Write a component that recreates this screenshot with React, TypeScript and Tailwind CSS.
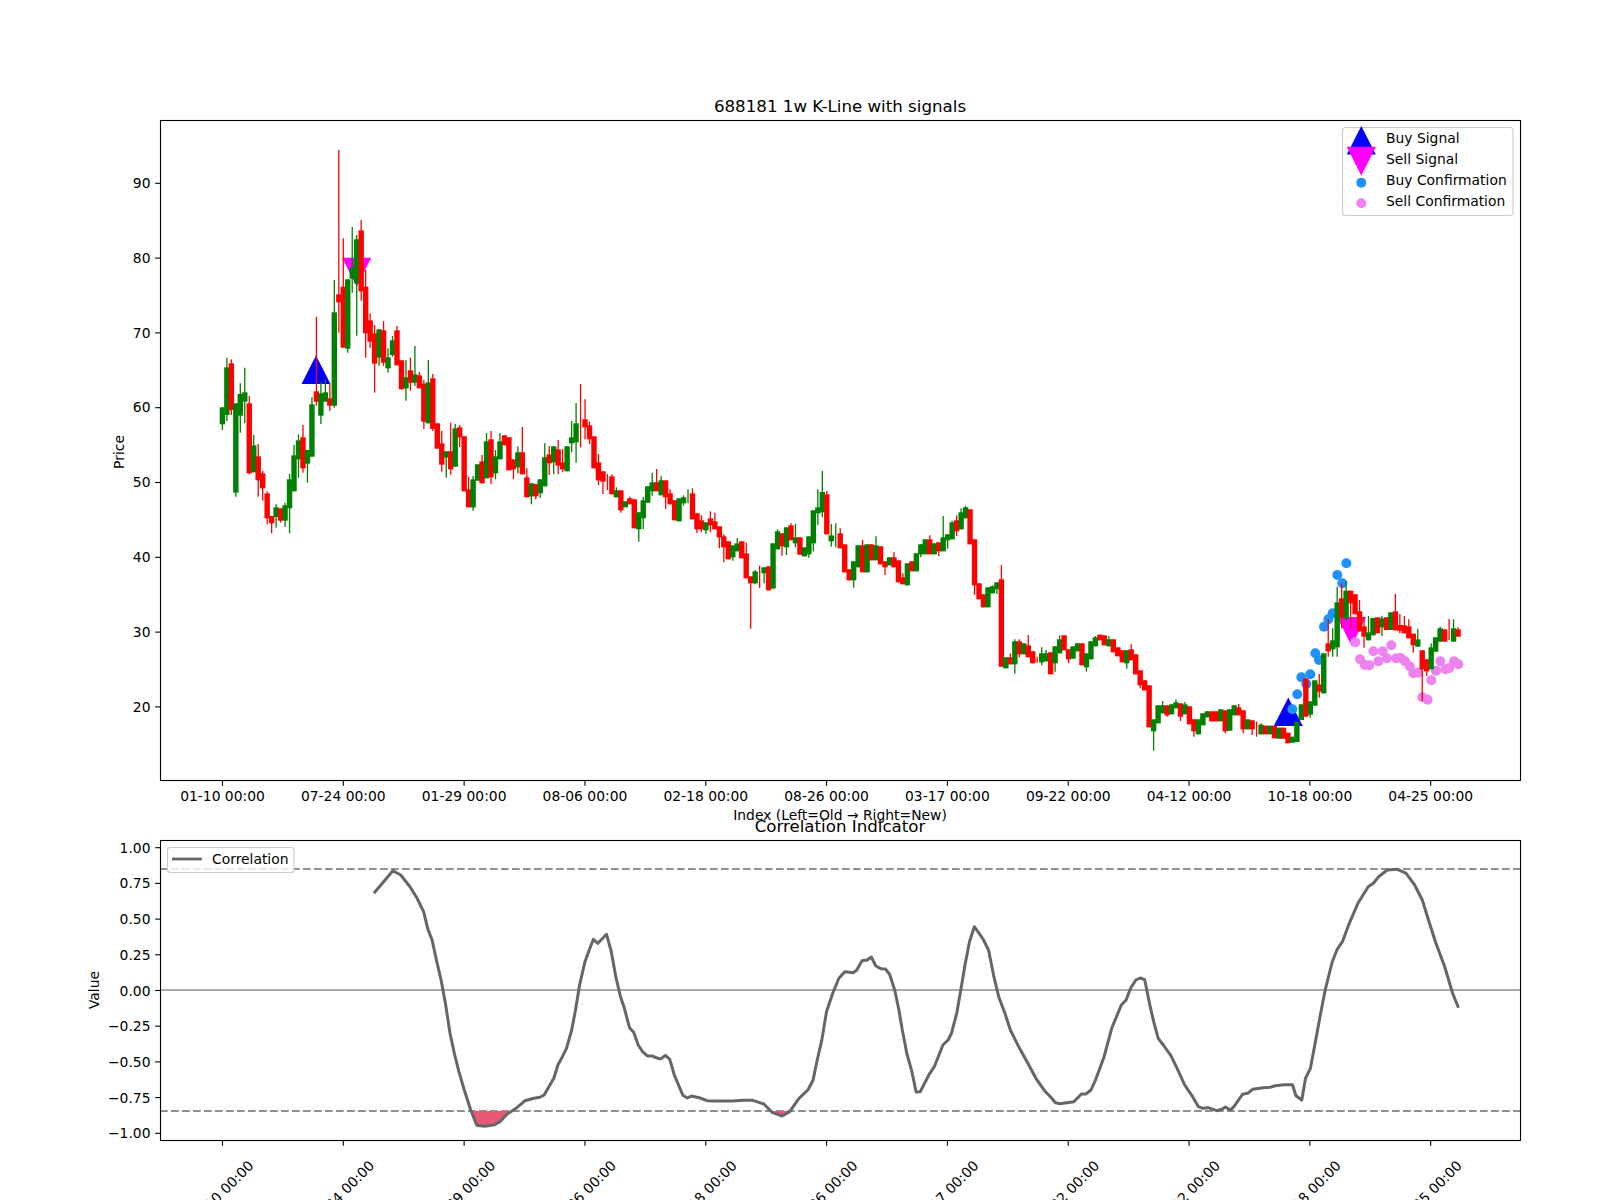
type C = [string, number, number, number?, number?];

const seg = (y0: number, rows: C[]) =>
  rows.map(([c, t, b, wt, wb]) => ({
    c,
    t: y0 + t / 3,
    b: y0 + b / 3,
    wt: y0 + (wt || t) / 3,
    wb: y0 + (wb || b) / 3,
    body: t !== b,
  }));

const candles = [
  ...seg(370, [
    ['g', 112, 163, 0, 180], ['g', -8, 135, -37, 153], ['r', -20, 120, -32, 135], ['g', 100, 368, 0, 380],
    ['g', 72, 137, 40, 188], ['g', 67, 95, -7, 160], ['r', 100, 310, 78, 313], ['g', 226, 307, 195, 0],
    ['r', 259, 331, 222, 380], ['r', 310, 355, 303, 392], ['r', 370, 445, 364, 463], ['r', 438, 460, 0, 490],
    ['g', 412, 441, 403, 473], ['r', 415, 452, 0, 458], ['g', 406, 452, 398, 470], ['g', 328, 415, 312, 490],
    ['g', 256, 364, 225, 0], ['g', 211, 268, 193, 323], ['r', 202, 295, 165, 308], ['g', 240, 281, 0, 338],
    ['g', 103, 260, 82, 0],
  ]),
  ...seg(90, [
    ['r', 904, 935, 680, 947], ['g', 910, 977, 876, 1002], ['g', 907, 935, 868, 0], ['r', 925, 947, 880, 963],
    ['g', 667, 947, 570, 953], ['r', 613, 637, 180, 728], ['r', 590, 773, 445, 0], ['g', 568, 776, 0, 788],
    ['g', 533, 566, 411, 608], ['g', 448, 580, 435, 737], ['r', 421, 604, 390, 632], ['r', 590, 730, 540, 803],
    ['r', 691, 755, 670, 773], ['r', 730, 821, 705, 908], ['g', 718, 803, 0, 827], ['r', 721, 818, 693, 828],
    ['g', 802, 835, 775, 848], ['g', 751, 795, 738, 800], ['r', 721, 826, 708, 0], ['r', 811, 898, 0, 0],
    ['g', 862, 895, 810, 932], ['r', 841, 878, 803, 902], ['g', 853, 878, 768, 888], ['r', 856, 895, 846, 0],
    ['r', 881, 995, 870, 1017], ['g', 877, 1000, 810, 0], ['r', 865, 1017, 852, 1023],
  ]),
  ...seg(370, [
    ['r', 160, 236, 0, 0], ['r', 220, 284, 183, 305], ['g', 244, 263, 0, 323], ['r', 244, 298, 158, 314],
    ['g', 175, 290, 162, 0], ['r', 172, 202, 165, 231], ['r', 199, 364, 0, 0], ['r', 358, 412, 320, 0],
    ['g', 328, 412, 318, 422], ['g', 283, 332, 0, 0], ['r', 274, 340, 255, 0], ['g', 214, 325, 189, 0],
    ['r', 208, 322, 183, 342], ['g', 259, 310, 240, 328], ['g', 214, 268, 189, 0], ['r', 196, 226, 0, 0],
    ['r', 202, 301, 0, 0], ['r', 268, 298, 0, 328], ['g', 247, 292, 229, 310], ['r', 247, 313, 171, 0],
    ['r', 322, 382, 295, 0], ['g', 340, 379, 0, 403], ['r', 342, 379, 0, 388], ['g', 328, 370, 0, 384],
    ['g', 262, 349, 220, 0], ['r', 253, 280, 228, 315], ['g', 229, 277, 0, 313], ['r', 238, 287, 210, 313],
    ['r', 277, 298, 237, 307], ['g', 229, 304, 0, 0], ['g', 202, 220, 153, 247], ['g', 160, 217, 99, 278],
    ['r', 205, 205, 42, 232], ['r', 148, 172, 88, 208], ['r', 166, 208, 155, 222], ['r', 199, 295, 0, 0],
    ['r', 277, 331, 252, 345], ['r', 304, 335, 0, 372], ['r', 330, 330, 312, 360], ['r', 319, 373, 313, 0],
    ['g', 361, 382, 352, 0], ['r', 361, 421, 0, 428], ['g', 394, 412, 0, 0], ['r', 385, 403, 380, 0],
    ['r', 388, 475, 0, 0], ['g', 427, 478, 0, 515],
  ]),
  ...seg(440, [
    ['g', 181, 235, 170, 268], ['g', 139, 188, 0, 0], ['g', 127, 154, 98, 167], ['r', 127, 154, 87, 0],
    ['g', 121, 166, 108, 0], ['r', 121, 172, 0, 207], ['r', 160, 193, 148, 0], ['r', 181, 241, 0, 0],
    ['g', 175, 244, 0, 0], ['g', 172, 190, 166, 197], ['g', 170, 170, 148, 190], ['r', 160, 238, 145, 0],
    ['r', 220, 268, 0, 279], ['r', 241, 268, 226, 277], ['g', 247, 271, 0, 282], ['r', 235, 256, 214, 277],
    ['r', 244, 268, 218, 0], ['r', 259, 292, 0, 325], ['r', 289, 322, 283, 367], ['r', 304, 358, 0, 0],
    ['g', 316, 352, 0, 362], ['g', 310, 334, 294, 0], ['r', 304, 355, 0, 0], ['r', 340, 415, 308, 0],
    ['r', 409, 430, 0, 566], ['g', 394, 430, 390, 433], ['r', 410, 410, 377, 444], ['g', 382, 400, 0, 430],
    ['r', 379, 451, 0, 0], ['g', 310, 445, 0, 448], ['g', 274, 328, 268, 0], ['r', 280, 319, 0, 347],
    ['g', 262, 322, 0, 345], ['r', 256, 301, 250, 0], ['g', 292, 310, 252, 322], ['r', 292, 344, 0, 0],
    ['g', 322, 349, 0, 0], ['g', 289, 343, 0, 353], ['g', 211, 310, 0, 334], ['g', 202, 220, 148, 255],
    ['g', 156, 217, 93, 232], ['r', 163, 283, 153, 0], ['g', 286, 304, 252, 320], ['g', 290, 290, 250, 322],
    ['r', 280, 325, 265, 0], ['r', 313, 397, 0, 0], ['r', 388, 421, 0, 0], ['g', 364, 421, 0, 443],
    ['g', 316, 382, 0, 0], ['r', 316, 397, 300, 0], ['g', 313, 397, 0, 0], ['r', 313, 361, 0, 0],
    ['g', 316, 361, 289, 0], ['r', 319, 373, 0, 0], ['r', 364, 382, 0, 405], ['g', 352, 376, 0, 0],
    ['r', 352, 382, 337, 0], ['r', 361, 427, 0, 0], ['r', 412, 433, 400, 0], ['g', 370, 436, 0, 0],
    ['r', 364, 394, 0, 0], ['g', 340, 394, 0, 0], ['g', 313, 343, 0, 352], ['g', 298, 343, 0, 0],
    ['r', 298, 343, 286, 0], ['g', 310, 343, 0, 0], ['r', 307, 334, 0, 348], ['g', 292, 334, 228, 0],
    ['g', 283, 301, 0, 326], ['g', 247, 298, 242, 0], ['r', 241, 274, 226, 288], ['g', 217, 268, 205, 0],
    ['g', 202, 235, 198, 0], ['r', 208, 313, 0, 0], ['r', 298, 436, 0, 465], ['r', 430, 478, 0, 0],
    ['r', 463, 502, 0, 0], ['g', 442, 502, 0, 0], ['g', 439, 460, 436, 0], ['g', 427, 448, 0, 462],
  ]),
  ...seg(560, [
    ['r', 58, 320, 15, 0], ['g', 292, 325, 0, 0], ['r', 292, 313, 280, 0], ['g', 244, 313, 238, 341],
    ['r', 244, 283, 238, 292], ['g', 250, 283, 0, 0], ['r', 256, 292, 225, 0], ['r', 274, 310, 0, 0],
    ['r', 300, 300, 290, 308], ['g', 280, 307, 262, 316], ['g', 280, 304, 270, 0], ['r', 277, 343, 0, 0],
    ['g', 259, 310, 0, 335], ['g', 238, 280, 226, 0], ['r', 226, 271, 0, 0], ['r', 268, 298, 0, 310],
    ['g', 259, 296, 0, 0], ['g', 250, 274, 0, 0], ['r', 250, 316, 0, 0], ['g', 280, 322, 0, 335],
    ['g', 244, 298, 0, 0], ['g', 232, 259, 228, 0], ['r', 224, 241, 0, 0], ['r', 226, 256, 0, 0],
    ['g', 238, 259, 228, 0], ['r', 238, 277, 0, 0], ['r', 262, 289, 0, 0], ['r', 271, 307, 0, 0],
    ['g', 271, 310, 0, 326], ['r', 268, 301, 252, 0], ['r', 283, 343, 0, 0], ['r', 331, 376, 0, 385],
    ['r', 361, 391, 0, 0], ['r', 376, 502, 0, 0], ['g', 478, 514, 0, 572], ['g', 436, 490, 0, 0],
    ['g', 436, 460, 423, 0], ['r', 436, 466, 0, 470], ['g', 433, 463, 0, 0], ['g', 427, 445, 418, 0],
    ['r', 430, 470, 0, 483], ['g', 433, 463, 426, 0], ['r', 439, 493, 0, 0], ['r', 478, 514, 0, 530],
    ['g', 478, 523, 0, 0], ['g', 460, 496, 0, 0], ['g', 454, 472, 0, 0], ['r', 454, 484, 0, 0],
    ['r', 454, 484, 0, 0], ['g', 448, 484, 0, 0], ['r', 451, 514, 0, 520], ['g', 448, 512, 0, 0],
    ['g', 436, 466, 0, 0], ['r', 442, 466, 432, 0], ['r', 451, 508, 0, 520], ['g', 478, 508, 0, 0],
  ]),
  ...seg(540, [
    ['r', 541, 568, 0, 585], ['r', 560, 560, 545, 590], ['g', 554, 583, 550, 0], ['r', 557, 583, 0, 0],
    ['g', 557, 583, 0, 0], ['r', 557, 595, 0, 0], ['g', 563, 596, 0, 0], ['r', 563, 596, 0, 0],
    ['r', 578, 610, 0, 0], ['g', 590, 608, 0, 0], ['g', 545, 606, 0, 0], ['g', 493, 540, 0, 0],
    ['r', 415, 530, 0, 0], ['g', 484, 524, 0, 533], ['g', 421, 497, 0, 0], ['r', 433, 455, 402, 473],
    ['g', 340, 460, 0, 0], ['r', 310, 334, 238, 350], ['g', 301, 328, 265, 350], ['g', 187, 322, 140, 350],
    ['r', 175, 232, 130, 265], ['g', 152, 235, 123, 243], ['r', 152, 190, 0, 265], ['r', 163, 223, 0, 0],
    ['r', 214, 274, 180, 0], ['r', 259, 290, 230, 323], ['g', 277, 301, 228, 0], ['g', 234, 286, 0, 0],
    ['r', 232, 280, 0, 0], ['g', 235, 262, 228, 288], ['r', 232, 270, 0, 0], ['g', 217, 270, 0, 0],
    ['r', 214, 271, 162, 0], ['r', 255, 272, 222, 280], ['r', 256, 280, 228, 0], ['r', 259, 295, 238, 0],
    ['r', 281, 316, 0, 338], ['g', 298, 320, 266, 0], ['r', 331, 388, 0, 484], ['r', 358, 394, 0, 408],
    ['g', 322, 388, 310, 0], ['g', 292, 335, 0, 0], ['g', 265, 305, 260, 0], ['r', 268, 305, 0, 0],
    ['r', 270, 270, 237, 300], ['g', 265, 305, 238, 0], ['r', 268, 290, 262, 0],
  ]),
];

const blue = [[289, 70], [262, 105], [277, 130], [248, 220], [235, 238], [222, 260], [196, 340], [207, 360], [181, 403], [154, 412], [169, 432], [142, 463], [127, 508]];
const violet = [[316, 307], [330, 358], [344, 375], [358, 376], [370, 334], [385, 364], [398, 334], [411, 355], [424, 316], [438, 355], [452, 354], [465, 364], [479, 379], [490, 400], [504, 398], [517, 472], [533, 479], [544, 421], [558, 392], [571, 364], [586, 388], [598, 384], [612, 364], [625, 373]];

const z7 = [[1047, 370], [1100, 302], [1122, 315], [1148, 350], [1168, 385], [1186, 425], [1198, 478], [1210, 510], [1222, 570], [1235, 630], [1247, 700], [1260, 790], [1272, 850], [1285, 905], [1300, 960], [1318, 1020], [1335, 1066], [1358, 1069], [1385, 1064], [1400, 1055], [1420, 1032], [1445, 1015], [1470, 992], [1495, 985]];
const z8 = [[0, 802], [12, 795], [25, 772], [40, 745], [52, 705], [65, 680], [77, 655], [92, 600], [103, 540], [115, 465], [130, 397], [143, 360], [155, 328], [168, 340], [193, 313], [207, 365], [220, 440], [233, 497], [245, 535], [260, 593], [272, 607], [285, 645], [298, 665], [312, 678], [325, 678], [345, 686], [352, 686], [364, 676], [377, 688], [390, 735], [415, 796], [428, 804], [440, 798], [465, 804], [485, 812], [510, 813], [560, 813], [590, 811], [618, 811], [650, 822], [675, 848], [703, 858], [725, 845], [752, 805], [778, 780], [793, 750], [805, 690], [818, 632], [832, 545], [850, 490], [868, 445], [885, 425], [910, 428], [920, 420], [935, 392], [950, 390], [962, 381], [975, 408], [990, 416], [1003, 417], [1015, 433], [1030, 480], [1042, 540], [1052, 600], [1065, 670], [1080, 725], [1092, 786], [1104, 785], [1130, 733], [1145, 710], [1170, 645], [1185, 630], [1195, 610], [1210, 550], [1222, 480], [1235, 400], [1247, 335], [1261, 290], [1275, 310], [1288, 330], [1303, 362], [1318, 440], [1332, 500], [1350, 550], [1366, 600], [1390, 650], [1415, 697], [1440, 745], [1465, 782], [1480, 798], [1497, 818], [1510, 821]];
const z9 = [[0, 821], [40, 815], [62, 792], [75, 792], [90, 780], [103, 750], [128, 680], [150, 595], [178, 525], [192, 510], [205, 475], [220, 450], [233, 444], [246, 449], [262, 530], [272, 575], [285, 625], [300, 645], [322, 677], [340, 715], [362, 765], [385, 800], [402, 830], [415, 835], [430, 833], [455, 842], [470, 838], [480, 831], [495, 840], [505, 830], [530, 793], [545, 790], [560, 778], [590, 773], [610, 772], [625, 767], [650, 764], [675, 764], [685, 797], [702, 810], [713, 745], [727, 715], [740, 645], [755, 560], [770, 480], [790, 397], [805, 358], [820, 335], [840, 280], [865, 220], [895, 170], [910, 160], [925, 140], [950, 120], [980, 118], [1005, 130], [1030, 165], [1052, 210], [1070, 270], [1090, 335], [1117, 410], [1140, 490], [1157, 533]];

const K = 1568 / 540;
const corr = [
  ...z7.map(([x, y]) => [x / 2.8, 770 + y / 3]),
  ...z8.map(([x, y]) => [540 + x / K, 830 + y / 3]),
  ...z9.map(([x, y]) => [1060 + x / K, 830 + y / 3]),
];
const pts = (a: number[][]) => a.map(([x, y]) => `${x.toFixed(1)},${y.toFixed(1)}`).join(' ');

const fill1 = pts([[1322, 1023], [1335, 1066], [1358, 1069], [1385, 1064], [1400, 1055], [1425, 1023]].map(([x, y]) => [x / 2.8, 770 + y / 3]));
const fill2 = pts([[672, 843], [703, 858], [730, 843]].map(([x, y]) => [540 + x / K, 830 + y / 3]));

const xLabels = ['01-10 00:00', '07-24 00:00', '01-29 00:00', '08-06 00:00', '02-18 00:00', '08-26 00:00', '03-17 00:00', '09-22 00:00', '04-12 00:00', '10-18 00:00', '04-25 00:00'];
const tickX = (k: number) => 222.5 + 120.82 * k;
const priceTicks = [90, 80, 70, 60, 50, 40, 30, 20];
const corrTicks = ['1.00', '0.75', '0.50', '0.25', '0.00', '−0.25', '−0.50', '−0.75', '−1.00'];

const tri = (cx: number, top: number, down = false) =>
  down
    ? `${cx - 14.5},${top} ${cx + 14.5},${top} ${cx},${top + 29}`
    : `${cx},${top} ${cx + 14.5},${top + 28.5} ${cx - 14.5},${top + 28.5}`;

export default function App() {
  return (
    <div className="h-[1200px] w-[1600px] overflow-hidden bg-white">
      <svg
        width="1600"
        height="1200"
        viewBox="0 0 1600 1200"
        className="block font-['DejaVu_Sans',sans-serif] text-[13.89px]"
      >
        {/* Price axes */}
        <text x="840" y="112" textAnchor="middle" fontSize="16.67">688181 1w K-Line with signals</text>
        <polygon points={tri(316, 355.5)} fill="#0000ff" />
        <polygon points={tri(1288.3, 697.5)} fill="#0000ff" />
        <polygon points={tri(356.7, 257.7, true)} fill="#ff00ff" />
        <polygon points={tri(1351.6, 617, true)} fill="#ff00ff" />
        {blue.map(([x, y], i) => (
          <circle key={i} cx={1250 + x / 3} cy={540 + y / 3} r="5" fill="#1e90ff" />
        ))}
        {violet.map(([x, y], i) => (
          <circle key={i} cx={1250 + x / 3} cy={540 + y / 3} r="5" fill="#ee82ee" />
        ))}
        {candles.map((d, i) => {
          const x = 222.4 + 4.477 * i;
          const col = d.c === 'g' ? '#008000' : '#ff0000';
          return (
            <g key={i}>
              <line x1={x} x2={x} y1={d.wt} y2={d.wb} stroke={col} strokeWidth="1.3" />
              {d.body && <rect x={x - 2.7} y={d.t} width="5.4" height={d.b - d.t} fill={col} />}
            </g>
          );
        })}
        <rect x="160.5" y="120.5" width="1360" height="660" fill="none" stroke="#000" strokeWidth="1.1" />
        {priceTicks.map((v) => {
          const y = 183.3 + (90 - v) * 7.48;
          return (
            <g key={v}>
              <line x1="155.2" x2="160" y1={y} y2={y} stroke="#000" strokeWidth="1.1" />
              <text x="150.5" y={y + 4.6} textAnchor="end">{v}</text>
            </g>
          );
        })}
        {xLabels.map((l, k) => (
          <g key={l}>
            <line x1={tickX(k)} x2={tickX(k)} y1="781" y2="785.8" stroke="#000" strokeWidth="1.1" />
            <text x={tickX(k)} y="801" textAnchor="middle">{l}</text>
          </g>
        ))}
        <text x="840" y="820" textAnchor="middle">Index (Left=Old → Right=New)</text>
        <text transform="translate(124,452) rotate(-90)" textAnchor="middle">Price</text>

        {/* Legend */}
        <rect x="1342.5" y="127.5" width="170.5" height="88" rx="3" fill="#fff" fillOpacity="0.8" stroke="#cccccc" strokeWidth="1.1" />
        <polygon points={tri(1361.3, 126)} fill="#0000ff" />
        <polygon points={tri(1361.3, 146.7, true)} fill="#ff00ff" />
        <circle cx="1361.3" cy="182.7" r="5" fill="#1e90ff" />
        <circle cx="1361.3" cy="203.3" r="5" fill="#ee82ee" />
        <text x="1386" y="143.3">Buy Signal</text>
        <text x="1386" y="164.3">Sell Signal</text>
        <text x="1386" y="185.3">Buy Confirmation</text>
        <text x="1386" y="206.3">Sell Confirmation</text>

        {/* Correlation axes */}
        <text x="840" y="832" textAnchor="middle" fontSize="16.67">Correlation Indicator</text>
        <line x1="160" x2="1520" y1="869" y2="869" stroke="#909090" strokeWidth="2.1" strokeDasharray="7.7 3.3" />
        <line x1="160" x2="1520" y1="1111" y2="1111" stroke="#909090" strokeWidth="2.1" strokeDasharray="7.7 3.3" />
        <line x1="160" x2="1520" y1="990" y2="990" stroke="#aaaaaa" strokeWidth="2" />
        <polygon points={fill1} fill="#e65a76" />
        <polygon points={fill2} fill="#e65a76" />
        <polyline points={pts(corr)} fill="none" stroke="#666666" strokeWidth="3" strokeLinejoin="round" />
        <rect x="160.5" y="840.5" width="1360" height="300" fill="none" stroke="#000" strokeWidth="1.1" />
        {corrTicks.map((l, i) => {
          const y = 847.7 + i * 35.7;
          return (
            <g key={l}>
              <line x1="155.2" x2="160" y1={y} y2={y} stroke="#000" strokeWidth="1.1" />
              <text x="150.5" y={y + 5} textAnchor="end">{l}</text>
            </g>
          );
        })}
        {xLabels.map((l, k) => (
          <g key={l}>
            <line x1={tickX(k)} x2={tickX(k)} y1="1141" y2="1145.8" stroke="#000" strokeWidth="1.1" />
            <text transform={`translate(${tickX(k) - 1.5},1193) rotate(-45)`} y="5" textAnchor="middle">{l}</text>
          </g>
        ))}
        <text transform="translate(99,990) rotate(-90)" textAnchor="middle">Value</text>

        <rect x="167.5" y="847.5" width="126.5" height="25" rx="3" fill="#fff" fillOpacity="0.8" stroke="#cccccc" strokeWidth="1.1" />
        <line x1="172" x2="201.8" y1="859" y2="859" stroke="#666666" strokeWidth="2.8" />
        <text x="212" y="864">Correlation</text>
      </svg>
    </div>
  );
}
